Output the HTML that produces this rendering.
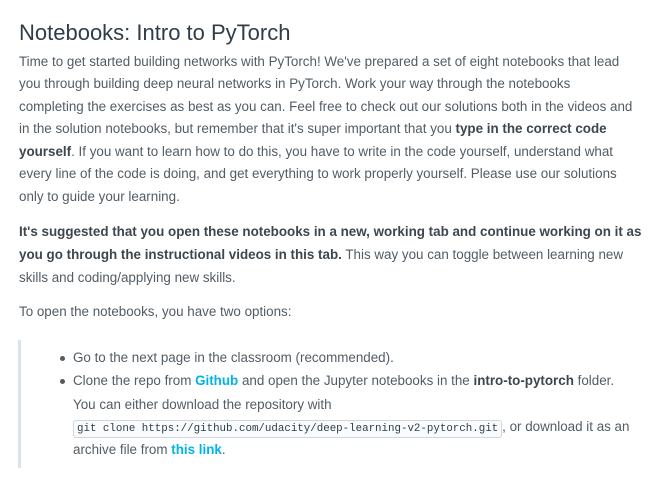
<!DOCTYPE html>
<html><head><meta charset="utf-8"><style>
body{margin:0;background:#fff;width:668px;height:482px;overflow:hidden;font-family:"Liberation Sans",sans-serif;color:#525c65;}
.l{position:absolute;white-space:nowrap;font-size:13.4px;line-height:22px;}
h1{position:absolute;left:19px;top:20px;margin:0;font-size:22px;font-weight:normal;color:#2e3d49;white-space:nowrap;}
b{color:#3d464e;}
a{color:#02b3e4;font-weight:bold;text-decoration:none;}
.bq{position:absolute;left:18px;top:340px;width:3px;height:128px;background:#dbe2e8;}
.dot{position:absolute;width:5px;height:5px;border-radius:50%;background:#525c65;}
code{font-family:"Liberation Mono",monospace;font-size:10.8px;color:#2e3d49;background:#fafbfc;border:1px solid #d0d6db;border-radius:3px;padding:2px 3px;}
</style></head><body>
<h1>Notebooks: Intro to PyTorch</h1>
<div class="l" style="left:19px;top:51px">Time to get started building networks with PyTorch! We've prepared a set of eight notebooks that lead</div>
<div class="l" style="left:19px;top:73px">you through building deep neural networks in PyTorch. Work your way through the notebooks</div>
<div class="l" style="left:19px;top:96px">completing the exercises as best as you can. Feel free to check out our solutions both in the videos and</div>
<div class="l" style="left:19px;top:118px">in the solution notebooks, but remember that it's super important that you <b>type in the correct code</b></div>
<div class="l" style="left:19px;top:141px"><b>yourself</b>. If you want to learn how to do this, you have to write in the code yourself, understand what</div>
<div class="l" style="left:19px;top:163px">every line of the code is doing, and get everything to work properly yourself. Please use our solutions</div>
<div class="l" style="left:19px;top:186px">only to guide your learning.</div>
<div class="l" style="left:19px;top:221px"><b>It's suggested that you open these notebooks in a new, working tab and continue working on it as</b></div>
<div class="l" style="left:19px;top:244px"><b>you go through the instructional videos in this tab.</b> This way you can toggle between learning new</div>
<div class="l" style="left:19px;top:267px">skills and coding/applying new skills.</div>
<div class="l" style="left:19px;top:301px">To open the notebooks, you have two options:</div>
<div class="bq"></div>
<div class="dot" style="left:60px;top:356px"></div>
<div class="dot" style="left:60px;top:379px"></div>
<div class="l" style="left:73px;top:347px">Go to the next page in the classroom (recommended).</div>
<div class="l" style="left:73px;top:370px">Clone the repo from <a>Github</a> and open the Jupyter notebooks in the <b>intro-to-pytorch</b> folder.</div>
<div class="l" style="left:73px;top:394px">You can either download the repository with</div>
<div class="l" style="left:73px;top:416px"><code>git clone https://github.com/udacity/deep-learning-v2-pytorch.git</code>, or download it as an</div>
<div class="l" style="left:73px;top:439px">archive file from <a>this link</a>.</div>
</body></html>
